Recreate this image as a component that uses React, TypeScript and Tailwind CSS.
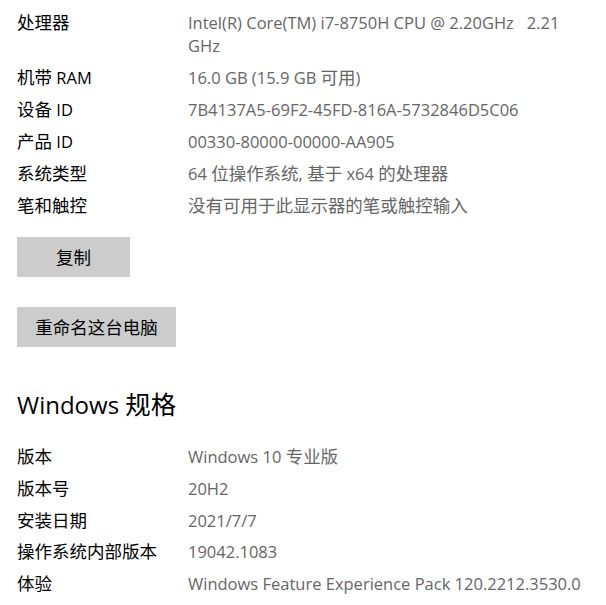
import type { ReactNode } from "react"

// CJK runs are set a touch larger so they match the width of the Windows UI font
function Txt({ children }: { children: string }) {
  const parts = children.split(/([\u2E80-\u9FFF\uFF00-\uFFEF]+)/)
  return (
    <>
      {parts.map((p, i) =>
        i % 2 === 1 ? (
          <span key={i} className="text-[1.06em]">
            {p}
          </span>
        ) : (
          p
        )
      )}
    </>
  )
}

const specs: [string, ReactNode][] = [
  [
    "处理器",
    <>
      Intel(R) Core(TM) i7-8750H CPU @ 2.20GHz{"\u00a0\u00a0 "}2.21
      <br />
      GHz
    </>,
  ],
  ["机带 RAM", <Txt>16.0 GB (15.9 GB 可用)</Txt>],
  ["设备 ID", "7B4137A5-69F2-45FD-816A-5732846D5C06"],
  ["产品 ID", "00330-80000-00000-AA905"],
  ["系统类型", <Txt>64 位操作系统, 基于 x64 的处理器</Txt>],
  ["笔和触控", <Txt>没有可用于此显示器的笔或触控输入</Txt>],
]

const winSpecs: [string, ReactNode][] = [
  ["版本", <Txt>Windows 10 专业版</Txt>],
  ["版本号", "20H2"],
  ["安装日期", "2021/7/7"],
  ["操作系统内部版本", "19042.1083"],
  ["体验", "Windows Feature Experience Pack 120.2212.3530.0"],
]

function Row({ label, value }: { label: string; value: ReactNode }) {
  return (
    <div className="grid grid-cols-[171px_1fr] leading-[23px]">
      <div className="text-black">
        <Txt>{label}</Txt>
      </div>
      <div className="text-[#666666]">{value}</div>
    </div>
  )
}

export default function App() {
  return (
    <div
      className="min-h-screen bg-white pl-[17px] pt-[11px] text-[16.5px]"
      style={{ fontFamily: '"Segoe UI", "Open Sans", "Noto Sans CJK SC", sans-serif' }}
    >
      <div className="flex flex-col gap-[9px]">
        {specs.map(([label, value]) => (
          <Row key={label} label={label} value={value} />
        ))}
      </div>

      <div className="mt-[20px] flex flex-col items-start gap-[30px]">
        <button className="h-[40px] w-[113px] bg-[#cccccc] text-black">
          <Txt>复制</Txt>
        </button>
        <button className="h-[40px] w-[159px] bg-[#cccccc] text-black">
          <Txt>重命名这台电脑</Txt>
        </button>
      </div>

      <h2 className="mt-[40px] text-[24px] leading-[34px] text-black">
        <Txt>Windows 规格</Txt>
      </h2>

      <div className="mt-[23px] flex flex-col gap-[8.8px]">
        {winSpecs.map(([label, value]) => (
          <Row key={label} label={label} value={value} />
        ))}
      </div>
    </div>
  )
}
